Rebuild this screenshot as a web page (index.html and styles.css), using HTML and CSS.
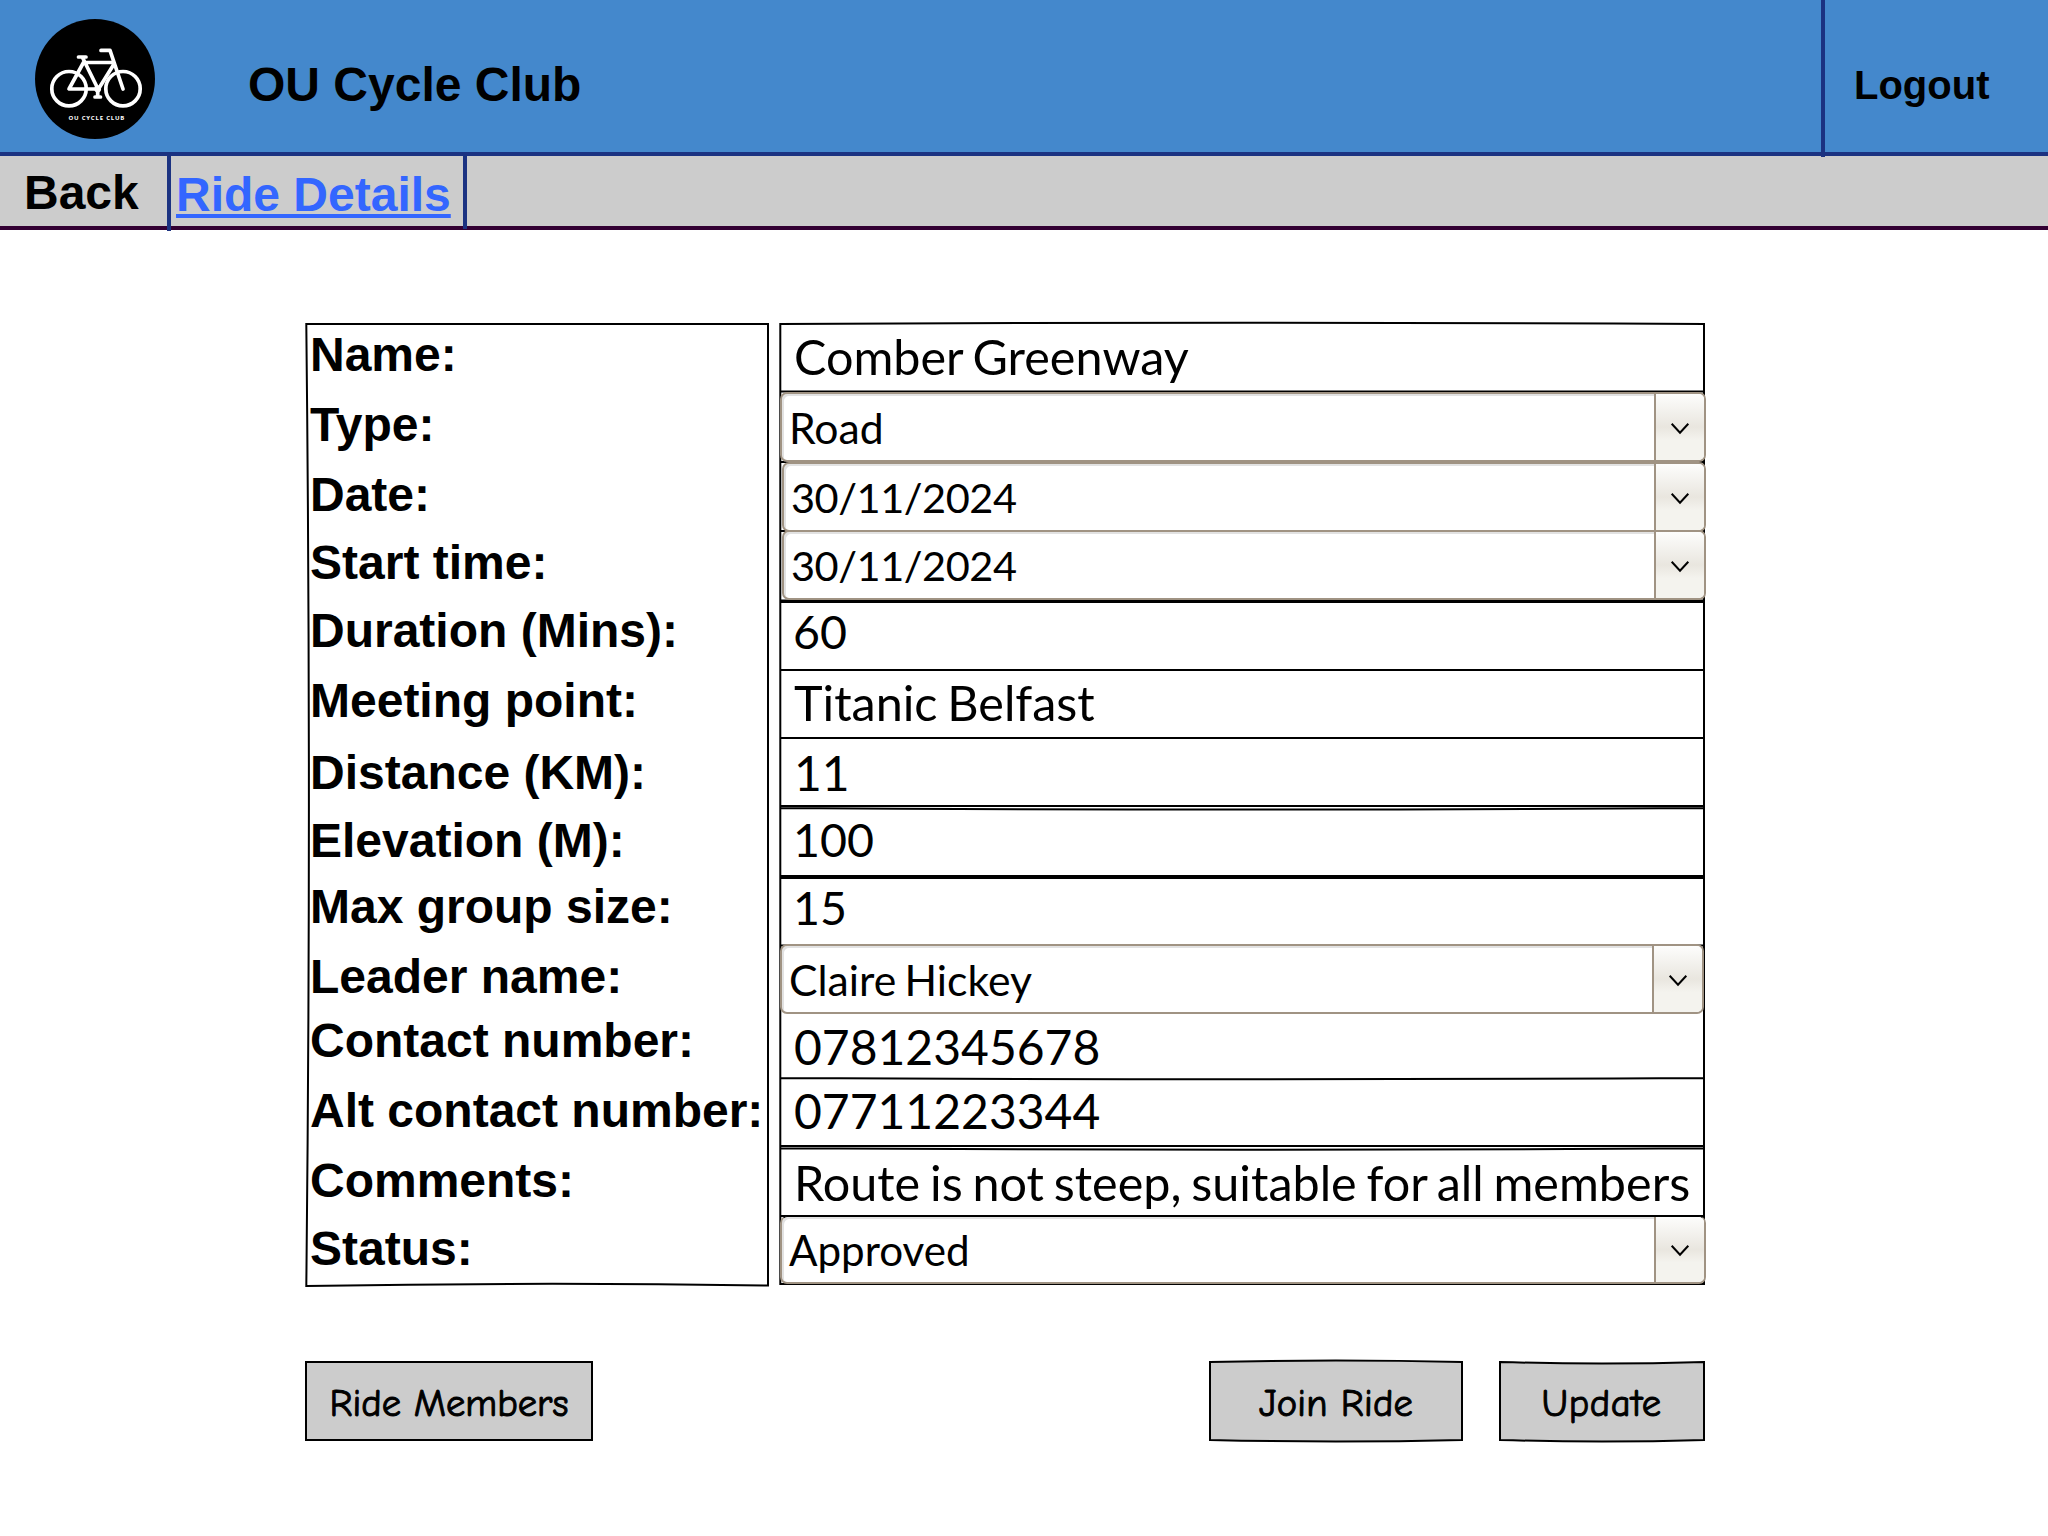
FILE: index.html
```html
<!DOCTYPE html>
<html lang="en">
<head>
<meta charset="utf-8">
<title>OU Cycle Club - Ride Details</title>
<link rel="stylesheet" href="styles.css">
</head>
<body>
<header class="header">
  <svg class="logo" viewBox="0 0 120 120">
    <circle cx="60" cy="60" r="60" fill="#000"/>
    <g class="bike">
      <circle cx="34" cy="69.7" r="17.2"/>
      <circle cx="88" cy="69.7" r="17.2"/>
      <path d="M43.5 38H51M47.5 38.5L63 70M48.5 43.5L34 70H62M49 43.5H78M79 45L63.5 70M66 31.4H75L88 70M62.7 70V78M60 78H65.5"/>
      <circle class="crank" cx="62.7" cy="70" r="3.4"/>
    </g>
    <text class="logo-text" x="33.4" y="101" textLength="56">OU CYCLE CLUB</text>
  </svg>
  <h1 class="title">OU Cycle Club</h1>
  <a class="logout">Logout</a>
</header>
<nav class="nav">
  <a class="back">Back</a>
  <a class="current">Ride Details</a>
</nav>
<main class="main">
  <form class="ride">
    <div class="labels">
      <svg class="sketch" viewBox="0 0 464 964"><path d="M1.3 1H463Q465 482 463 962.500Q232 959 1.300 963Q6.500 482 1.300 1Z"/></svg>
      <label>Name:</label>
      <label>Type:</label>
      <label>Date:</label>
      <label>Start time:</label>
      <label>Duration (Mins):</label>
      <label>Meeting point:</label>
      <label>Distance (KM):</label>
      <label>Elevation (M):</label>
      <label>Max group size:</label>
      <label>Leader name:</label>
      <label>Contact number:</label>
      <label>Alt contact number:</label>
      <label>Comments:</label>
      <label>Status:</label>
    </div>
    <div class="values">
      <svg class="sketch" viewBox="0 0 928 964"><path d="M1.300 1Q463 -1.500 925 1V961H1.300ZM1.300 68.500H925M1.300 139H925M1.300 208H925M1.300 277.500H925M1.300 279H925M1.300 347Q463 349 925 347M1.300 415Q463 413 925 415M1.300 483H925M1.300 485Q463 488 925 485M1.300 553H925M1.300 555H925M1.300 622.500H925M1.300 755Q463 757.500 925 755M1.300 823H925M1.300 825.300Q463 828 925 825.300M1.300 893H925"/></svg>
      <div class="row name"><span>Comber Greenway</span></div>
      <div class="row combo type"><span>Road</span><i><svg viewBox="0 0 18 11"><path d="M.7.7L9 9.700L17.300.7"/></svg></i></div>
      <div class="row combo date"><span>30/11/2024</span><i><svg viewBox="0 0 18 11"><path d="M.7.7L9 9.700L17.300.7"/></svg></i></div>
      <div class="row combo date start"><span>30/11/2024</span><i><svg viewBox="0 0 18 11"><path d="M.7.7L9 9.700L17.300.7"/></svg></i></div>
      <div class="row num duration"><span>60</span></div>
      <div class="row meeting"><span>Titanic Belfast</span></div>
      <div class="row digits distance"><span>11</span></div>
      <div class="row num elevation"><span>100</span></div>
      <div class="row num group-size"><span>15</span></div>
      <div class="row combo leader"><span>Claire Hickey</span><i><svg viewBox="0 0 18 11"><path d="M.7.7L9 9.700L17.300.7"/></svg></i></div>
      <div class="row digits contact"><span>07812345678</span></div>
      <div class="row digits alt"><span>07711223344</span></div>
      <div class="row comments"><span>Route is not steep, suitable for all members</span></div>
      <div class="row combo status"><span>Approved</span><i><svg viewBox="0 0 18 11"><path d="M.7.7L9 9.700L17.300.7"/></svg></i></div>
    </div>
  </form>
  <div class="actions">
    <a class="btn members"><svg class="sketch" viewBox="0 0 288 80"><path d="M1 1H287V79H1Z"/></svg><span>Ride Members</span></a>
    <a class="btn join"><svg class="sketch" viewBox="0 0 254 80"><path d="M1 1Q127 -2 253 1V79Q127 82 1 79Z"/></svg><span>Join Ride</span></a>
    <a class="btn update"><svg class="sketch" viewBox="0 0 206 80"><path d="M1 1Q103 4 205 1V79Q103 82 1 79Z"/></svg><span>Update</span></a>
  </div>
</main>
</body>
</html>
```
FILE: styles.css
```css
* { box-sizing: border-box; }

body {
  margin: 0;
  width: 2048px;
  height: 1536px;
  overflow: hidden;
  background: #fff;
  color: #000;
  font-family: "Liberation Sans", Arial, sans-serif;
}

.header {
  display: flex;
  align-items: flex-start;
  height: 156px;
  background: #4488cc;
  border-bottom: 4px solid #1b3281;
}

.logo {
  width: 120px;
  height: 120px;
  margin: 19px 93px 0 35px;
}

.bike {
  fill: none;
  stroke: #fff;
  stroke-width: 3.7;
  stroke-linecap: round;
  stroke-linejoin: round;
}

.bike .crank { fill: #fff; stroke: none; }

.logo-text { fill: #fff; font: bold 6px "Open Sans", sans-serif; }

.title {
  margin: 0;
  padding-top: 57px;
  font-size: 48px;
  line-height: 56px;
}

.logout {
  width: 227px;
  height: 157px;
  margin-left: auto;
  padding: 60px 0 0 29px;
  border-left: 4px solid #1b3281;
  font-size: 40px;
  font-weight: bold;
  line-height: 50px;
}

.nav {
  display: flex;
  align-items: flex-start;
  height: 74px;
  background: #ccc;
  border-bottom: 4px solid #330033;
  font-size: 48px;
  font-weight: bold;
  line-height: 56px;
}

.back {
  width: 171px;
  height: 75px;
  padding: 9px 0 0 24px;
  border-right: 4px solid #1b3281;
}

.current {
  width: 296px;
  height: 73px;
  padding: 11px 0 0 5px;
  border-right: 4px solid #1b3281;
  color: #3366ff;
  text-decoration: underline;
  text-decoration-thickness: 4px;
  text-underline-offset: 3px;
}

.main { padding: 93px 342px 0 305px; }

.ride { display: flex; gap: 10px; }

.sketch {
  position: absolute;
  inset: 0;
  width: 100%;
  height: 100%;
  overflow: visible;
  fill: none;
  stroke: #000;
  stroke-width: 2;
}

.labels {
  position: relative;
  display: grid;
  grid-template-rows: 70px 70px 68px 68px 70px 72px 68px 66px 70px 64px 70px 70px 68px 56px;
  flex: none;
  width: 464px;
  height: 964px;
  padding: 4px 0 0 5px;
  font-size: 48px;
  font-weight: bold;
  line-height: 56px;
  white-space: nowrap;
}

.values {
  position: relative;
  display: flex;
  flex-direction: column;
  flex: none;
  width: 928px;
  height: 964px;
  padding-top: 1px;
  font-family: Lato, Carlito, sans-serif;
  font-size: 48.5px;
  line-height: 58px;
  word-spacing: -2.6px;
  white-space: nowrap;
}

.row {
  position: relative;
  flex: none;
  display: flex;
  padding-left: 15px;
}

.digits { font-size: 48px; }
.num { padding-left: 14px; font-size: 46.5px; }

.name { height: 68px; padding-top: 3px; }
.duration { height: 69px; padding-top: 1px; }
.meeting { height: 68px; padding-top: 3px; }
.distance { height: 69px; padding-top: 6px; }
.elevation { height: 70px; padding-top: 3px; }
.group-size { height: 67px; padding-top: 1px; }
.contact { height: 64px; padding-top: 4px; }
.alt { height: 70px; padding-top: 4px; }
.comments { height: 68px; padding-top: 5px; }

.combo {
  justify-content: space-between;
  margin-left: 1px;
  width: 926px;
  height: 70px;
  padding-left: 7px;
  background: #fff;
  border: 2px solid #a09383;
  border-radius: 7px;
  box-shadow: inset 2px 2px 0 #e2e2e2;
  font-size: 42.2px;
}

.combo span { padding-top: 4px; }
.type span, .leader span { padding-top: 5px; }
.type, .leader { font-size: 42.7px; }
.date { margin-left: 3px; width: 924px; font-size: 41.5px; letter-spacing: -0.45px; }
.start { margin-top: -2px; margin-bottom: 1px; }
.leader { width: 924px; }
.status { height: 68px; border-top-color: #000; border-top-width: 1px; }

.combo i {
  display: flex;
  justify-content: center;
  align-items: center;
  width: 50px;
  padding-top: 3px;
  border-left: 2px solid #a09383;
  border-radius: 0 5px 5px 0;
  background: linear-gradient(#fdfdfc, #e9e6df 50%, #f4f3ee 70%, #f4f3ee);
}

.status i { padding-top: 1px; }

.combo i svg {
  width: 18px;
  height: 11px;
  overflow: visible;
  fill: none;
  stroke: #000;
  stroke-width: 2;
}

.actions {
  display: flex;
  gap: 36px;
  padding: 74px 1px 0 0;
}

.btn {
  position: relative;
  display: flex;
  justify-content: center;
  height: 80px;
  padding-top: 19px;
  font-family: "Comic Neue", "Comic Sans MS", Lato, sans-serif;
  font-size: 38.5px;
  line-height: 48px;
  -webkit-text-stroke: 1px #000;
}

.btn .sketch { fill: #ccc; }
.btn span { position: relative; }
.members { width: 288px; margin-right: auto; }
.join { width: 254px; letter-spacing: 0.2px; }
.update { width: 206px; padding-right: 1px; letter-spacing: 0.6px; }
```
